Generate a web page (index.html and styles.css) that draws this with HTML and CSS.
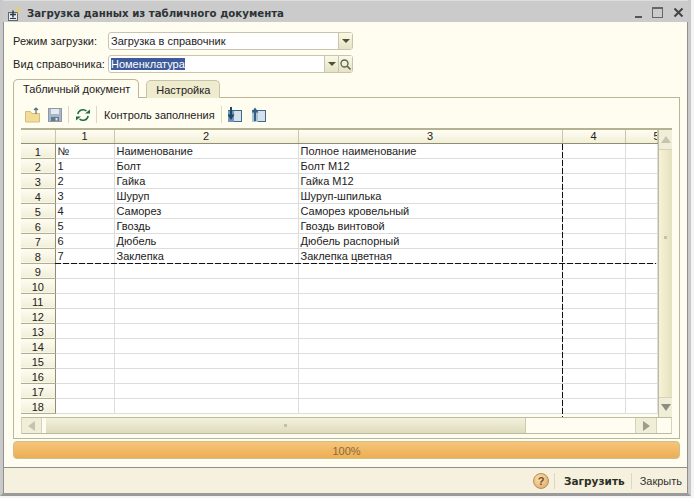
FILE: index.html
```html
<!DOCTYPE html>
<html lang="ru">
<head>
<meta charset="utf-8">
<title>Загрузка данных из табличного документа</title>
<link rel="stylesheet" href="styles.css">
</head>
<body>
<div class="window">
  <header class="titlebar">
    <svg class="app-icon" width="18" height="18" viewBox="0 0 18 18"><rect x="4.500" y="8.500" width="9" height="8" fill="#e8ebee" stroke="#5d6770"/><path d="M9 6.500v7M6 10.500h6" stroke="#2f3a44" stroke-width="1.500"/><path d="M6 14.500h6" stroke="#2f3a44"/><path d="M14 2l1 3 3 1-3 1-1 3-1-3-3-1 3-1z" fill="#e9cf63"/></svg>
    <span class="title">Загрузка данных из табличного документа</span>
    <div class="winbtns">
      <svg width="50" height="14" viewBox="0 0 50 14"><rect x="0" y="10" width="7" height="2" fill="#555"/><rect x="17.500" y="1.500" width="10" height="10" fill="none" stroke="#666"/><rect x="17" y="1" width="11" height="2" fill="#666"/><path d="M39.500 2.500l8 8M47.500 2.500l-8 8" stroke="#444" stroke-width="2"/></svg>
    </div>
  </header>
  <main class="content">
    <div class="form-row">
      <label class="lbl">Режим загрузки:</label>
      <div class="field">
        <span class="field-text">Загрузка в справочник</span>
        <span class="fbtn"><i class="arrow"></i></span>
      </div>
    </div>
    <div class="form-row">
      <label class="lbl">Вид справочника:</label>
      <div class="field">
        <span class="field-text"><span class="sel">Номенклатура</span></span>
        <span class="fbtn"><i class="arrow"></i></span>
        <span class="fbtn">
          <svg width="13" height="13" viewBox="0 0 13 13"><circle cx="5.500" cy="5.500" r="3.500" fill="none" stroke="#55624a" stroke-width="1.300"/><path d="M8 8l3.500 3.500" stroke="#55624a" stroke-width="1.600"/></svg>
        </span>
      </div>
    </div>
    <div class="tabs">
      <div class="tab tab-active">Табличный документ</div>
      <div class="tab">Настройка</div>
    </div>
    <section class="panel">
      <div class="toolbar">
        <svg class="tool tool-folder" width="18" height="18" viewBox="0 0 18 18"><path d="M1.500 5.500h5l1.500 2h7.500v8.500h-14z" fill="#f3dd96" stroke="#d3bd7c"/><path d="M12 8V2M10 4l2-2 2 2" fill="none" stroke="#5b6f7c" stroke-width="1.200"/></svg>
        <svg class="tool" width="16" height="16" viewBox="0 0 16 16"><rect x="1.500" y="1.500" width="13" height="13" fill="#a9b7c5" stroke="#8a9aaa"/><rect x="4" y="2" width="8" height="5" fill="#e4eaef"/><rect x="4" y="10" width="8" height="4" fill="#65798c"/><rect x="8.500" y="11" width="2" height="2.500" fill="#dfe5ea"/></svg>
        <span class="tsep"></span>
        <svg class="tool" width="16" height="16" viewBox="0 0 16 16"><path d="M2.800 7A5.300 5.300 0 0 1 11.500 4" fill="none" stroke="#1f6b45" stroke-width="1.500"/><path d="M13.200 9A5.300 5.300 0 0 1 4.500 12" fill="none" stroke="#1f6b45" stroke-width="1.500"/><path d="M10 6.500h5V2.500zM6 9.500H1v4z" fill="#1f6b45"/></svg>
        <span class="tsep"></span>
        <span class="tool-text">Контроль заполнения</span>
        <span class="tsep"></span>
        <svg class="tool tool-load" width="15" height="18" viewBox="2 0 15 18"><rect x="2.500" y="4.500" width="13" height="11" fill="#d5e2ec" stroke="#3f6a8c"/><rect x="2" y="5" width="6" height="11" fill="#6f96b4"/><path d="M5 1v9" stroke="#1f4666" stroke-width="2"/><path d="M1.500 8.500h7L5 14z" fill="#1f4666"/></svg>
        <svg class="tool" width="15" height="18" viewBox="2 0 15 18"><rect x="2.500" y="4.500" width="13" height="11" fill="#d5e2ec" stroke="#3f6a8c"/><rect x="2" y="5" width="6" height="11" fill="#a9c3d6"/><path d="M5 15V6" stroke="#35607f" stroke-width="2"/><path d="M1.500 6.500h7L5 1.500z" fill="#35607f"/></svg>
      </div>
      <div class="sheet">
        <div class="sheet-main">
          <table class="grid">
            <colgroup><col class="c0"><col class="c1"><col class="c2"><col class="c3"><col class="c4"><col class="c5"></colgroup>
            <thead>
              <tr><th></th><th>1</th><th>2</th><th>3</th><th>4</th><th class="clip"><span>5</span></th></tr>
            </thead>
            <tbody>
              <tr><th>1</th><td>№</td><td>Наименование</td><td>Полное наименование</td><td></td><td></td></tr>
              <tr><th>2</th><td>1</td><td>Болт</td><td>Болт М12</td><td></td><td></td></tr>
              <tr><th>3</th><td>2</td><td>Гайка</td><td>Гайка М12</td><td></td><td></td></tr>
              <tr><th>4</th><td>3</td><td>Шуруп</td><td>Шуруп-шпилька</td><td></td><td></td></tr>
              <tr><th>5</th><td>4</td><td>Саморез</td><td>Саморез кровельный</td><td></td><td></td></tr>
              <tr><th>6</th><td>5</td><td>Гвоздь</td><td>Гвоздь винтовой</td><td></td><td></td></tr>
              <tr><th>7</th><td>6</td><td>Дюбель</td><td>Дюбель распорный</td><td></td><td></td></tr>
              <tr><th>8</th><td>7</td><td>Заклепка</td><td>Заклепка цветная</td><td></td><td></td></tr>
              <tr><th>9</th><td></td><td></td><td></td><td></td><td></td></tr>
              <tr><th>10</th><td></td><td></td><td></td><td></td><td></td></tr>
              <tr><th>11</th><td></td><td></td><td></td><td></td><td></td></tr>
              <tr><th>12</th><td></td><td></td><td></td><td></td><td></td></tr>
              <tr><th>13</th><td></td><td></td><td></td><td></td><td></td></tr>
              <tr><th>14</th><td></td><td></td><td></td><td></td><td></td></tr>
              <tr><th>15</th><td></td><td></td><td></td><td></td><td></td></tr>
              <tr><th>16</th><td></td><td></td><td></td><td></td><td></td></tr>
              <tr><th>17</th><td></td><td></td><td></td><td></td><td></td></tr>
              <tr><th>18</th><td></td><td></td><td></td><td></td><td></td></tr>
            </tbody>
          </table>
          <div class="vscroll">
            <span class="sbtn"><i class="tri tri-up"></i></span>
            <span class="vthumb"><i class="grip"></i></span>
            <span class="sbtn sbtn-end"><i class="tri tri-down"></i></span>
          </div>
        </div>
        <div class="hscroll">
          <span class="hbtn"><i class="tri tri-left"></i></span>
          <span class="hthumb"><i class="grip"></i></span>
          <span class="htrack"></span>
          <span class="hbtn hbtn-end"><i class="tri tri-right"></i></span>
          <span class="corner"></span>
        </div>
      </div>
    </section>
    <div class="progress"><span>100%</span></div>
  </main>
  <footer class="footer">
    <span class="help">?</span>
    <span class="fsep fsep-first"></span>
    <strong class="act">Загрузить</strong>
    <span class="fsep"></span>
    <span class="act">Закрыть</span>
  </footer>
</div>
</body>
</html>
```
FILE: styles.css
```css
* { box-sizing: border-box; }
html, body { margin: 0; padding: 0; background: #f4f4f4; }
body { width: 694px; height: 498px; overflow: hidden; font: 11px "Liberation Sans", Arial, sans-serif; color: #222; }
.window { width: 691px; height: 496px; display: flex; flex-direction: column; background: #c9c9c9; border: solid #c9c9c9; border-width: 0 3px 0 3px; border-bottom: 3px solid #9a9a9a; }
.titlebar { height: 22px; flex: none; display: flex; align-items: center; padding: 3px 0 0 1px; background: #cbcbcb; border-top: 1px solid #dedede; }
.app-icon { margin-right: 5px; }
.title { font: bold 10.2px "DejaVu Sans", sans-serif; color: #2d3336; }
.winbtns { margin-left: auto; margin-right: 3px; height: 14px; }
.content { flex: 1; min-height: 0; display: flex; flex-direction: column; background: #fffcf0; border-left: 1px solid #8f8f8f; border-right: 1px solid #8f8f8f; padding: 9px 7px 0 9px; }
.form-row { display: flex; align-items: center; height: 20px; margin-bottom: 3px; }
.lbl { width: 95px; flex: none; letter-spacing: .1px; }
.field { width: 245px; height: 18px; display: flex; align-items: stretch; background: #fff; border: 1px solid #c9c5ab; border-radius: 3px; }
.field-text { flex: 1; padding: 1px 2px; line-height: 14px; }
.sel { background: #3d5a9a; color: #fff; }
.fbtn { width: 14px; display: flex; align-items: center; justify-content: center; background: linear-gradient(#fbf8e8, #e6e2c4); border-left: 1px solid #c9c5ab; }
.fbtn svg { display: block; }
.arrow { width: 0; height: 0; border: 4px solid transparent; border-top: 4px solid #4a5236; border-bottom: 0; }
.tabs { display: flex; height: 19px; margin-top: 2px; gap: 7px; position: relative; z-index: 1; }
.tab { height: 18px; padding: 0 9px; line-height: 18px; background: #eeebcf; border: 1px solid #c6c3a6; border-bottom: 0; border-radius: 5px 5px 0 0; margin-top: 1px; }
.tab-active { background: #fffcf0; height: 19px; margin-top: 0; padding: 0 8px 0 9px; line-height: 19px; border-color: #b9b69a; }
.panel { height: 342px; margin-top: -1px; border: 1px solid #b9b69a; padding: 3px 7px 3px 7px; flex: none; }
.toolbar { height: 27px; display: flex; align-items: center; padding-left: 3px; }
.tool { flex: none; }
.tool-folder { margin-right: 5px; }
.tool-load { margin-right: 9px; }
.tsep { width: 1px; height: 17px; background: #ddd9bf; margin: 0 6px 0 5px; flex: none; }
.tool-text { margin: 0 1px; }
.sheet { height: 306px; width: 651px; display: flex; flex-direction: column; border-top: 2px solid #b5b293; }
.sheet-main { flex: 1; min-height: 0; display: flex; overflow: hidden; position: relative; }
.sheet-main::before { content: ""; position: absolute; left: 541px; top: 14px; bottom: 0; width: 1px; background: repeating-linear-gradient(#111 0 6px, transparent 6px 8px); }
.sheet-main::after { content: ""; position: absolute; left: 34px; top: 133px; width: 601px; height: 1px; background: repeating-linear-gradient(90deg, #111 0 6px, transparent 6px 8px); }
.grid { width: 636px; table-layout: fixed; border-collapse: collapse; background: #fff; flex: none; align-self: flex-start; }
col.c0 { width: 34px; } col.c1 { width: 59px; } col.c2 { width: 184px; } col.c3 { width: 264px; } col.c4 { width: 63px; } col.c5 { width: 32px; }
.grid thead th { height: 13px; font-weight: normal; text-align: center; background: linear-gradient(#fffdf2, #f1eed8); border-right: 1px solid #c9c6ad; border-bottom: 1px solid #8f8d72; padding: 0; line-height: 12px; }
.grid thead th.clip { text-align: right; overflow: hidden; }
.clip span { display: inline-block; margin-right: -3px; }
.grid tbody th { height: 15px; font-weight: normal; text-align: center; background: linear-gradient(#fffdf2, #f1eed8); border-right: 1px solid #8f8d72; border-bottom: 1px solid #b0ae92; padding: 2px 0 0 0; line-height: 12px; }
.grid td { height: 15px; padding: 0 0 0 2px; line-height: 14px; border-right: 1px solid #ddd; border-bottom: 1px solid #ddd; white-space: nowrap; overflow: hidden; }
.vscroll { width: 15px; flex: none; display: flex; flex-direction: column; border-left: 1px solid #bdbaa0; background: #fffdf2; }
.sbtn { height: 20px; flex: none; display: flex; align-items: center; justify-content: center; background: #f1eed8; border-bottom: 1px solid #d6d3ba; }
.sbtn-end { border-bottom: 0; border-top: 1px solid #d6d3ba; }
.vthumb { flex: 1; display: flex; align-items: flex-start; justify-content: center; padding-top: 86px; background: linear-gradient(90deg, #f6f2d9, #e4dfba); }
.hscroll { height: 17px; flex: none; display: flex; border-top: 1px solid #bdbaa0; border-bottom: 1px solid #bdbaa0; background: #fffdf2; border-left: 1px solid #d6d3ba; border-right: 1px solid #d6d3ba; }
.hbtn { width: 20px; flex: none; display: flex; align-items: center; justify-content: center; background: #f1eed8; border-right: 1px solid #d6d3ba; }
.hbtn-end { border-right: 0; border-left: 1px solid #d6d3ba; width: 21px; }
.hthumb { width: 480px; flex: none; margin-left: 4px; display: flex; align-items: center; justify-content: center; background: linear-gradient(#f3f1dd, #dedbbd); border-right: 1px solid #cfcbae; }
.htrack { flex: 1; background: #fffdf2; }
.corner { width: 15px; flex: none; background: #fffcf0; border-left: 1px solid #d6d3ba; }
.grip { width: 3px; height: 3px; display: block; background: #c4c1a9; }
.tri { width: 0; height: 0; display: block; border: 5px solid transparent; }
.tri-up { border-top: 0; border-bottom: 7px solid #c6c4b0; }
.tri-down { border-bottom: 0; border-top: 7px solid #8d8d82; }
.tri-left { border-left: 0; border-right: 7px solid #c6c4b0; }
.tri-right { border-right: 0; border-left: 7px solid #9c9c8e; }
.progress { height: 18px; width: 667px; margin: 2px 0 0 0; border: 1px solid #c9c191; border-radius: 4px; background: linear-gradient(#f6c57a, #ecae52); text-align: center; line-height: 18px; color: #8a6a3a; flex: none; }
.footer { height: 26px; flex: none; display: flex; align-items: center; justify-content: flex-end; background: #f6f1de; border: 1px solid #8f8f8f; border-width: 1px 1px 0 1px; padding: 1px 5px 0 0; }
.help { width: 16px; height: 16px; border-radius: 50%; background: radial-gradient(circle at 40% 35%, #f9e2b4, #d9a35c); border: 1px solid #b98e55; color: #7b4a1a; font: bold 11px/14px "Liberation Sans", sans-serif; text-align: center; }
.fsep { width: 1px; height: 16px; background: #ddd8bd; margin: 0 8px 0 6px; }
.fsep-first { margin: 0 9px 0 5px; }
.act { color: #333; }
strong.act { font: bold 10.5px "DejaVu Sans", sans-serif; color: #2d3023; }
```
